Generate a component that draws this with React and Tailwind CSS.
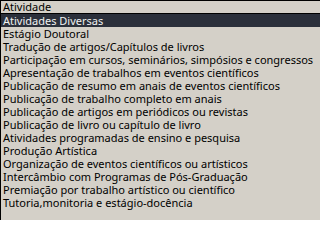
import React from "react";

const items = [
  "Atividades Diversas",
  "Estágio Doutoral",
  "Tradução de artigos/Capítulos de livros",
  "Participação em cursos, seminários, simpósios e congressos",
  "Apresentação de trabalhos em eventos científicos",
  "Publicação de resumo em anais de eventos científicos",
  "Publicação de trabalho completo em anais",
  "Publicação de artigos em periódicos ou revistas",
  "Publicação de livro ou capítulo de livro",
  "Atividades programadas de ensino e pesquisa",
  "Produção Artística",
  "Organização de eventos científicos ou artísticos",
  "Intercâmbio com Programas de Pós-Graduação",
  "Premiação por trabalho artístico ou científico",
  "Tutoria,monitoria e estágio-docência",
];

export default function App() {
  return (
    <div
      className="w-[320px] h-[220px] bg-[#d4d0c8] text-black text-[11px] leading-[13px] overflow-hidden"
      style={{ fontFamily: '"Noto Sans", sans-serif' }}
    >
      {/* closed select */}
      <div className="border-t border-b border-l border-black h-[14px] pl-[2px] leading-[12px]">
        Atividade
      </div>

      {/* open list */}
      <ul className="border-l border-black h-[206px]">
        {items.map((item, i) => (
          <li
            key={item}
            className={
              i === 0
                ? "h-[13px] pl-[2px] whitespace-nowrap bg-[#2b303b] text-[#f0f0f0]"
                : "h-[13px] pl-[2px] whitespace-nowrap"
            }
          >
            {item}
          </li>
        ))}
      </ul>
    </div>
  );
}
